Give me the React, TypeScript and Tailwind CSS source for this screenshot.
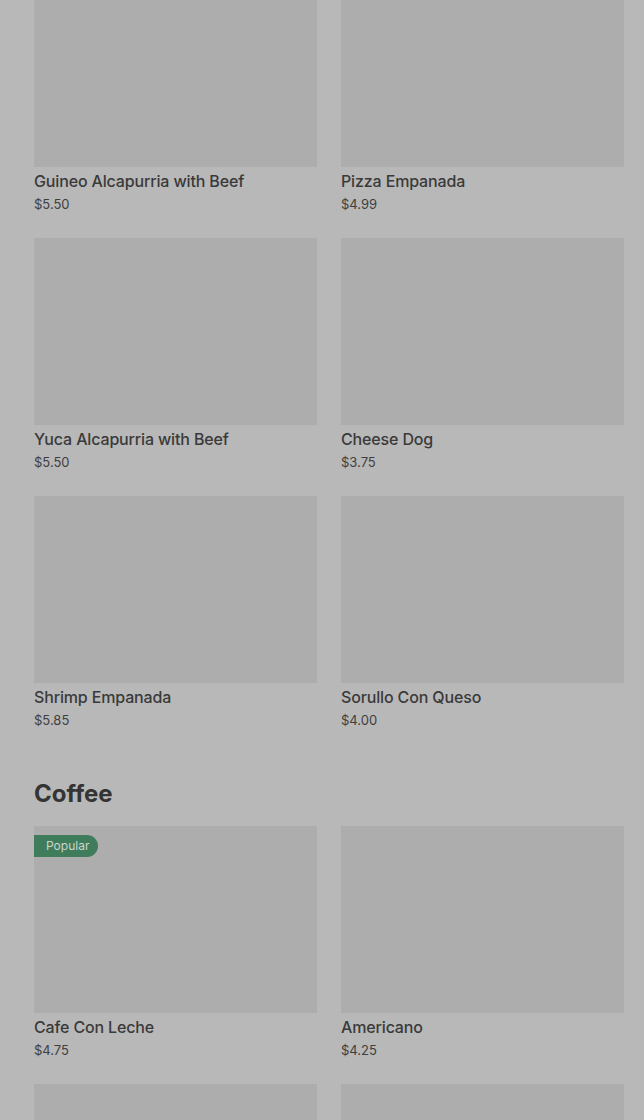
type Item = { name?: string; price?: string; popular?: boolean };

const snacks: Item[] = [
  { name: 'Guineo Alcapurria with Beef', price: '$5.50' },
  { name: 'Pizza Empanada', price: '$4.99' },
  { name: 'Yuca Alcapurria with Beef', price: '$5.50' },
  { name: 'Cheese Dog', price: '$3.75' },
  { name: 'Shrimp Empanada', price: '$5.85' },
  { name: 'Sorullo Con Queso', price: '$4.00' },
];

// last row is scrolled below the fold, only the photos peek in
const coffee: Item[] = [
  { name: 'Cafe Con Leche', price: '$4.75', popular: true },
  { name: 'Americano', price: '$4.25' },
  {},
  {},
];

function ItemCard({ item }: { item: Item }) {
  return (
    <div className="flex flex-col">
      <div className="relative h-[187px] w-full bg-[#adadad]">
        {item.popular && (
          <span className="absolute left-0 top-[9px] flex h-[22px] items-center rounded-r-full bg-[#3f7c5c] pl-3 pr-[9px] text-[12px] text-[#c9d6cf]">
            Popular
          </span>
        )}
      </div>
      {item.name && (
        <>
          <div className="mt-[2px] text-[16px] font-medium leading-6 tracking-[-0.15px] text-[#3a3a3a]">{item.name}</div>
          <div className="mt-px text-[13px] leading-5 text-[#3f3f3f]">{item.price}</div>
        </>
      )}
    </div>
  );
}

export default function App() {
  return (
    <div className="h-[1120px] w-full overflow-hidden bg-[#b8b8b8]" style={{ fontFamily: 'Inter, "Noto Sans", sans-serif' }}>
      <div className="-mt-[20px] pl-[34px] pr-[20px]">
        {/* ── previous section ── */}
        <div className="grid grid-cols-2 gap-x-6 gap-y-[24px]">
          {snacks.map((item, i) => (
            <ItemCard key={i} item={item} />
          ))}
        </div>

        {/* ── Coffee ── */}
        <h2 className="mt-12 text-[24px] font-bold leading-8 text-[#343434]">Coffee</h2>
        <div className="mt-[16px] grid grid-cols-2 gap-x-6 gap-y-[24px]">
          {coffee.map((item, i) => (
            <ItemCard key={i} item={item} />
          ))}
        </div>
      </div>
    </div>
  );
}
